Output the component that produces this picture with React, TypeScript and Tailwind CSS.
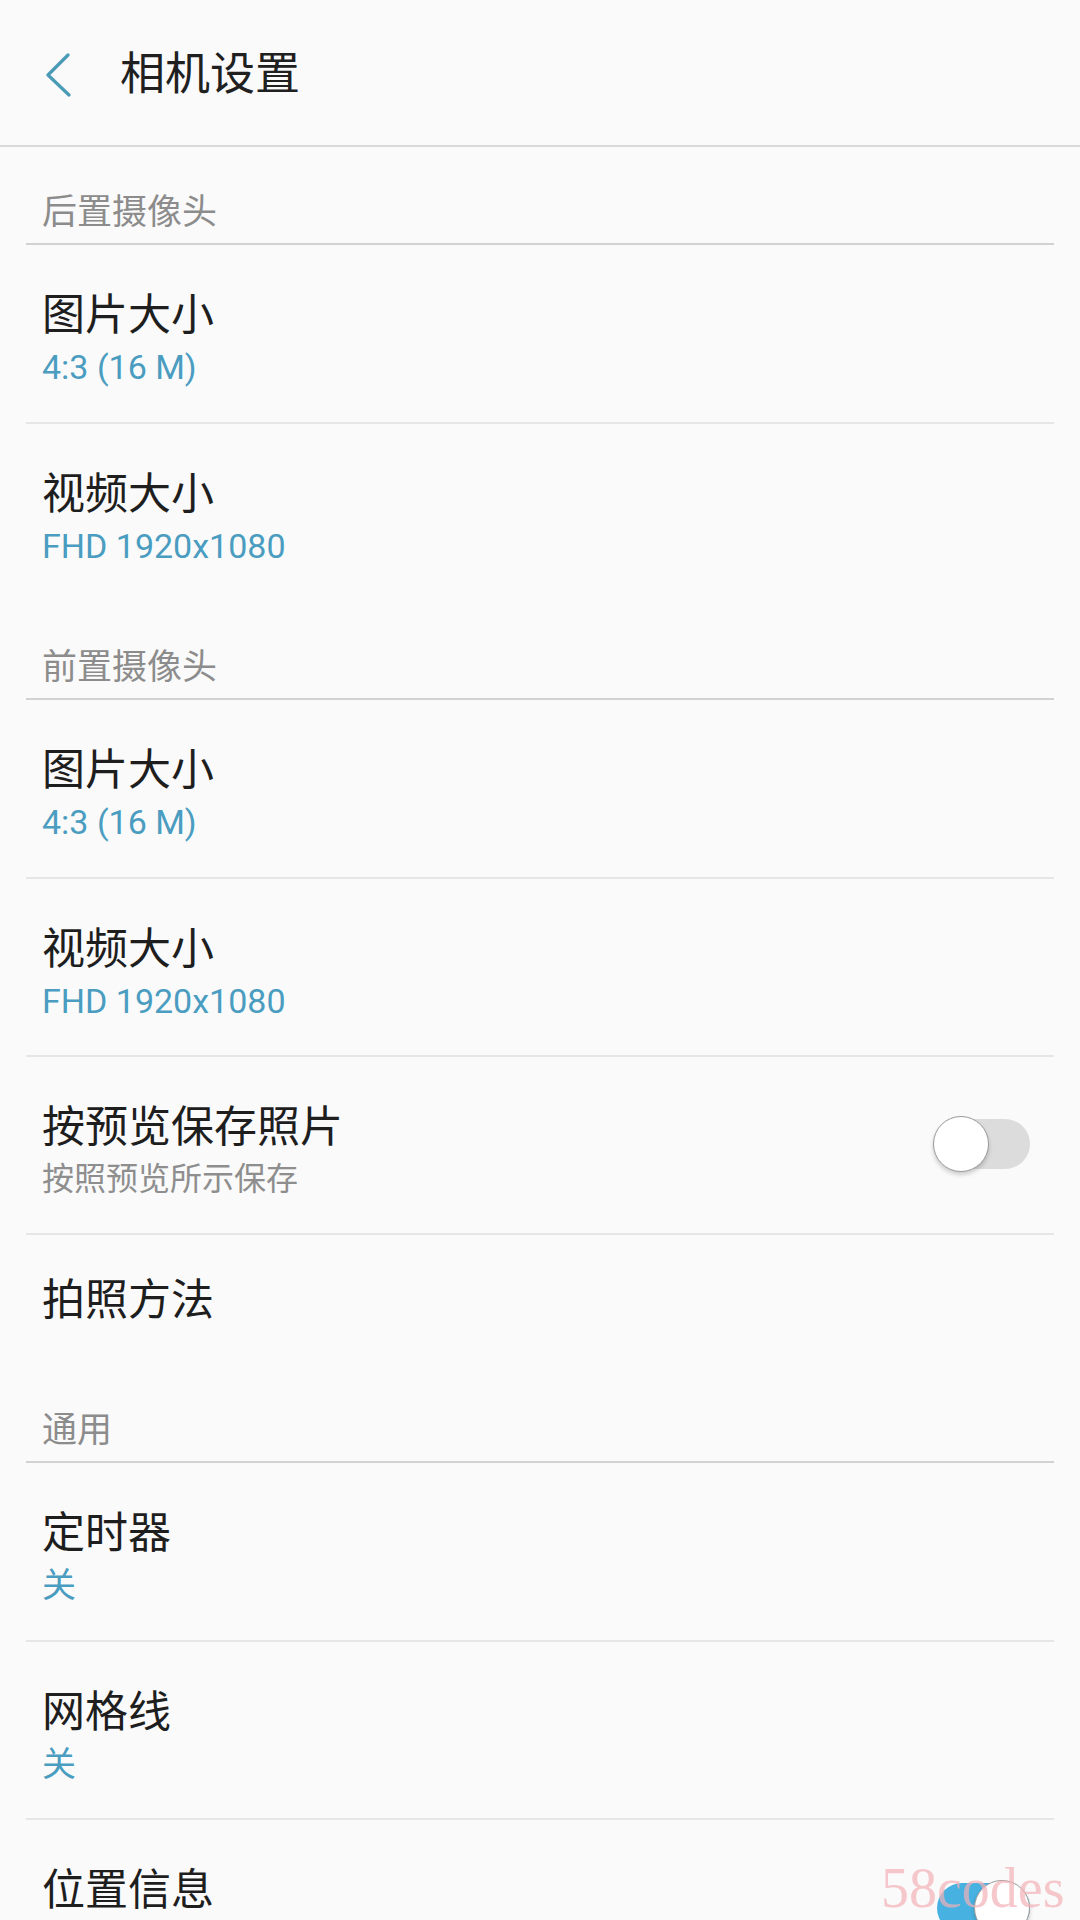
import type { ReactNode } from 'react';

type Row =
  | { kind: 'section'; label: string }
  | {
      kind: 'item';
      title: string;
      value?: string;
      hint?: string;
      toggle?: boolean;
      divider?: boolean;
      single?: boolean;
      spacer?: boolean;
      first?: boolean;
    };

const ROWS: Row[] = [
  { kind: 'section', label: '后置摄像头' },
  { kind: 'item', title: '图片大小', value: '4:3 (16 M)', divider: true, first: true },
  { kind: 'item', title: '视频大小', value: 'FHD 1920x1080' },
  { kind: 'section', label: '前置摄像头' },
  { kind: 'item', title: '图片大小', value: '4:3 (16 M)', divider: true, first: true },
  { kind: 'item', title: '视频大小', value: 'FHD 1920x1080', divider: true },
  { kind: 'item', title: '按预览保存照片', hint: '按照预览所示保存', toggle: false, divider: true },
  { kind: 'item', title: '拍照方法', single: true },
  { kind: 'section', label: '通用' },
  { kind: 'item', title: '定时器', value: '关', divider: true, first: true },
  { kind: 'item', title: '网格线', value: '关', divider: true },
  { kind: 'item', title: '位置信息', toggle: true, spacer: true },
];

function Toggle({ on }: { on: boolean }) {
  return (
    <div className="relative w-[97px] h-[56px] mr-[8px] shrink-0">
      <div
        className={
          on
            ? 'absolute left-[4px] right-0 top-[3px] h-[50px] rounded-full bg-[#47b1e1]'
            : 'absolute left-[4px] right-0 top-[3px] h-[50px] rounded-full bg-[#dcdcdc]'
        }
      />
      <div
        className={
          on
            ? 'absolute right-0 top-0 w-[56px] h-[56px] rounded-full bg-white border border-[#9a9a9a] shadow-[0_3px_4px_rgba(0,0,0,0.18)]'
            : 'absolute left-0 top-0 w-[56px] h-[56px] rounded-full bg-white border border-[#9a9a9a] shadow-[0_3px_4px_rgba(0,0,0,0.18)]'
        }
      />
    </div>
  );
}

function SectionHeader({ label }: { label: string }) {
  return (
    <div className="mx-[26px] h-[98px] border-b-2 border-[#d2d2d2] px-[16px] pt-[46px]">
      <div className="text-[35px] leading-[40px] text-[#8c8c8c]">{label}</div>
    </div>
  );
}

function Item({ row }: { row: Extract<Row, { kind: 'item' }> }) {
  const border = row.divider ? 'border-b-2 border-[#e6e6e6]' : '';
  const height = row.first ? 'h-[179px]' : 'h-[178px]';
  let body: ReactNode;

  if (row.single) {
    return (
      <div className={`mx-[26px] h-[130px] px-[16px] flex items-center ${border}`}>
        <div className="text-[43px] leading-[48px] text-[#1e1e1e]">{row.title}</div>
      </div>
    );
  }

  body = (
    <div className="flex flex-col pt-[46px]">
      <div className="text-[43px] leading-[48px] text-[#1e1e1e]">{row.title}</div>
      {row.value && <div className="text-[34px] leading-[56px] text-[#4a9dc0]">{row.value}</div>}
      {row.hint && <div className="text-[32px] leading-[56px] text-[#8e8e8e]">{row.hint}</div>}
      {row.spacer && <div className="h-[56px]" />}
    </div>
  );

  return (
    <div className={`mx-[26px] ${height} px-[16px] flex items-start justify-between ${border}`}>
      {body}
      {row.toggle !== undefined && (
        <div className="self-stretch flex items-center pb-[2px]">
          <Toggle on={row.toggle} />
        </div>
      )}
    </div>
  );
}

export default function App() {
  return (
    <div className="relative w-[1080px] h-[1920px] overflow-hidden bg-[#fafafa] font-['Roboto','Noto_Sans_CJK_SC',sans-serif]">
      <header className="h-[147px] pt-[5px] border-b-2 border-[#dadada] flex items-center">
        <div className="w-[120px] flex justify-start pl-[44px]">
          <svg width="28" height="44" viewBox="0 0 28 44" fill="none">
            <path d="M24 2 L4 22 L25 42" stroke="#4a9bb6" strokeWidth="3.2" strokeLinecap="round" strokeLinejoin="round" />
          </svg>
        </div>
        <h1 className="text-[45px] leading-[52px] text-[#202020] font-normal">相机设置</h1>
      </header>

      {ROWS.map((row, i) =>
        row.kind === 'section' ? <SectionHeader key={i} label={row.label} /> : <Item key={i} row={row} />
      )}

      <div className="absolute left-[881px] top-[1860px] font-['Liberation_Serif',serif] text-[56px] leading-[56px] text-[#f2b0b6]/70 pointer-events-none">
        58codes
      </div>
    </div>
  );
}
